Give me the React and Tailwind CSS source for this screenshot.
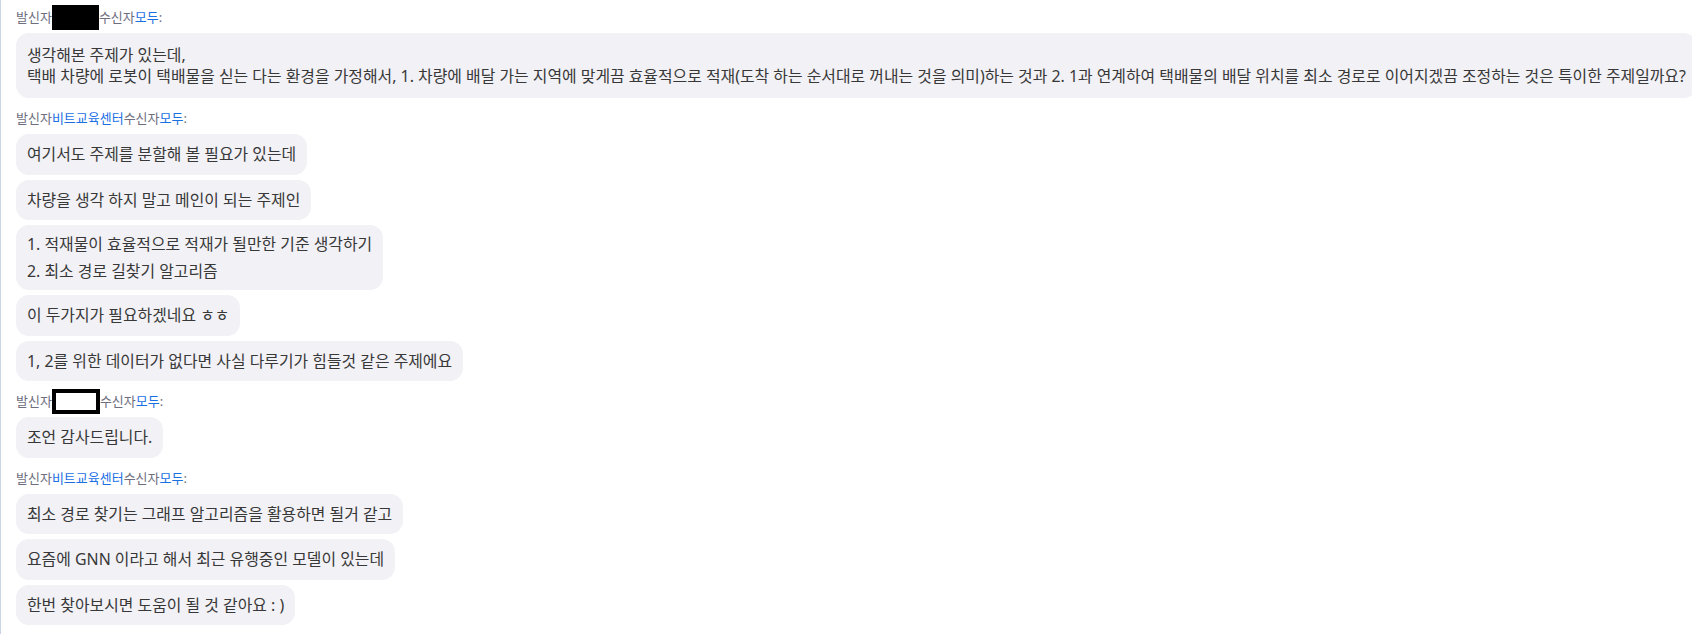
const font = { fontFamily: '"Noto Sans", "Noto Sans CJK KR", sans-serif' };

const messages = [
  {
    from: 'hidden',
    lines: [
      ['생각해본 주제가 있는데,', '택배 차량에 로봇이 택배물을 싣는 다는 환경을 가정해서, 1. 차량에 배달 가는 지역에 맞게끔 효율적으로 적재(도착 하는 순서대로 꺼내는 것을 의미)하는 것과 2. 1과 연계하여 택배물의 배달 위치를 최소 경로로 이어지겠끔 조정하는 것은 특이한 주제일까요?'],
    ],
  },
  {
    from: '비트교육센터',
    lines: [
      ['여기서도 주제를 분할해 볼 필요가 있는데'],
      ['차량을 생각 하지 말고 메인이 되는 주제인'],
      ['1. 적재물이 효율적으로 적재가 될만한 기준 생각하기', '2. 최소 경로 길찾기 알고리즘'],
      ['이 두가지가 필요하겠네요 ㅎㅎ'],
      ['1, 2를 위한 데이터가 없다면 사실 다루기가 힘들것 같은 주제에요'],
    ],
  },
  {
    from: 'boxed',
    lines: [['조언 감사드립니다.']],
  },
  {
    from: '비트교육센터',
    lines: [
      ['최소 경로 찾기는 그래프 알고리즘을 활용하면 될거 같고'],
      ['요즘에 GNN 이라고 해서 최근 유행중인 모델이 있는데'],
      ['한번 찾아보시면 도움이 될 것 같아요 : )'],
    ],
  },
];

function Sender({ from }) {
  return (
    <div className="flex h-[20px] items-center text-[13px] leading-[20px] text-[#6e6e7e]">
      <span>발신자</span>
      {from === 'hidden' && <span className="h-[25px] w-[47px] bg-black" />}
      {from === 'boxed' && <span className="h-[25px] w-[48px] border-[4px] border-black bg-white" />}
      {from !== 'hidden' && from !== 'boxed' && <span className="text-[#1a6fe3]">{from}</span>}
      <span>수신자</span>
      <span className="text-[#1a6fe3]">모두</span>
      <span>:</span>
    </div>
  );
}

function Bubble({ lines }) {
  if (lines.length > 1 && lines[0].startsWith('1.')) {
    return (
      <div className="w-fit rounded-[13px] bg-[#f1f1f6] px-[11px] py-[5.5px] text-[15.9px] leading-[27px] text-[#383838]">
        {lines.map((l) => (
          <div key={l}>{l}</div>
        ))}
      </div>
    );
  }
  if (lines.length > 1) {
    return (
      <div className="w-fit whitespace-nowrap rounded-[13px] bg-[#f1f1f6] px-[11px] py-[11.5px] text-[15.9px] leading-[21px] text-[#383838]">
        {lines.map((l) => (
          <div key={l}>{l}</div>
        ))}
      </div>
    );
  }
  return (
    <div className="w-fit rounded-[13px] bg-[#f1f1f6] px-[11px] py-[10px] text-[15.9px] leading-[20.5px] text-[#383838]">
      {lines[0]}
    </div>
  );
}

export default function App() {
  return (
    <div className="h-[634px] w-[1692px] overflow-hidden bg-white" style={font}>
      <div className="flex h-full flex-col gap-[10px] border-l border-[#c9d4e6] pl-[15px] pt-[7px]">
        {messages.map((m, i) => (
          <div key={i} className="flex flex-col">
            <Sender from={m.from} />
            <div className="mt-[6px] flex flex-col gap-[5px]">
              {m.lines.map((lines, j) => (
                <Bubble key={j} lines={lines} />
              ))}
            </div>
          </div>
        ))}
      </div>
    </div>
  );
}
